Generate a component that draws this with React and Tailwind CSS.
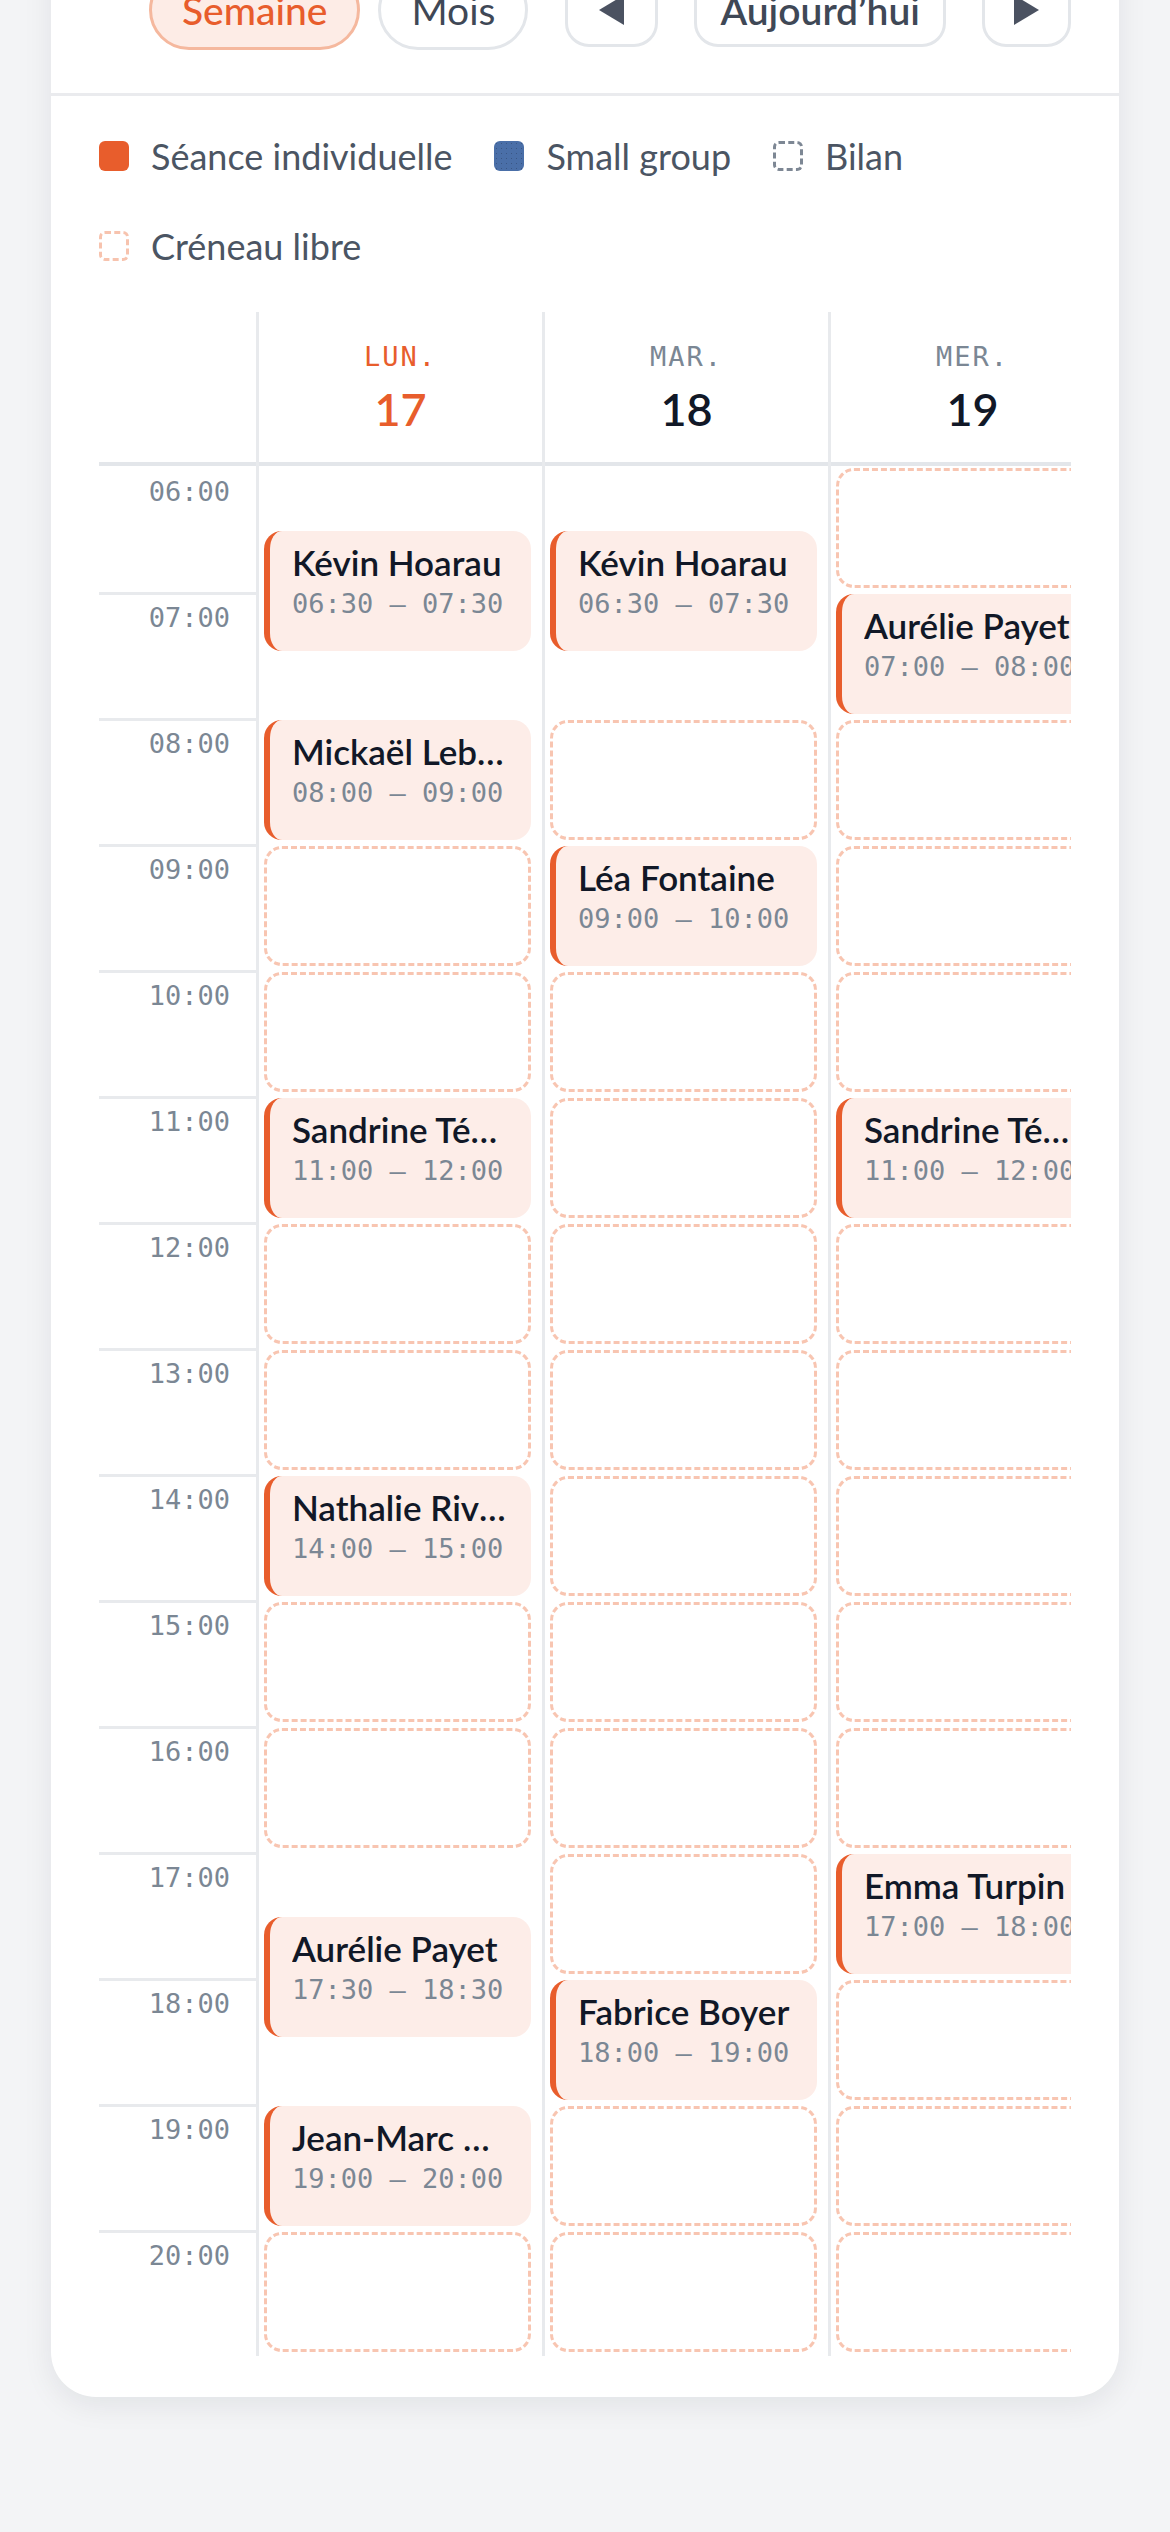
import React from "react";

const HOUR_PX = 126;
const FIRST_HOUR = 6;
const HOURS = Array.from({ length: 15 }, (_, i) => FIRST_HOUR + i);

const toMinutes = (t) => {
  const [h, m] = t.split(":").map(Number);
  return h * 60 + m;
};
const label = (h) => `${String(h).padStart(2, "0")}:00`;

// Week of 17 → 23
const WEEK = [
  {
    short: "LUN.",
    date: 17,
    today: true,
    events: [
      { name: "Kévin Hoarau", start: "06:30", end: "07:30" },
      { name: "Mickaël Lebreton", start: "08:00", end: "09:00" },
      { name: "Sandrine Técher", start: "11:00", end: "12:00" },
      { name: "Nathalie Rivière", start: "14:00", end: "15:00" },
      { name: "Aurélie Payet", start: "17:30", end: "18:30" },
      { name: "Jean-Marc Grondin", start: "19:00", end: "20:00" },
    ],
    free: [9, 10, 12, 13, 15, 16, 20],
  },
  {
    short: "MAR.",
    date: 18,
    events: [
      { name: "Kévin Hoarau", start: "06:30", end: "07:30" },
      { name: "Léa Fontaine", start: "09:00", end: "10:00" },
      { name: "Fabrice Boyer", start: "18:00", end: "19:00" },
    ],
    free: [8, 10, 11, 12, 13, 14, 15, 16, 17, 19, 20],
  },
  {
    short: "MER.",
    date: 19,
    events: [
      { name: "Aurélie Payet", start: "07:00", end: "08:00" },
      { name: "Sandrine Técher", start: "11:00", end: "12:00" },
      { name: "Emma Turpin", start: "17:00", end: "18:00" },
    ],
    free: [6, 8, 9, 10, 12, 13, 14, 15, 16, 18, 19, 20],
  },
  {
    short: "JEU.",
    date: 20,
    events: [
      { name: "Kévin Hoarau", start: "06:30", end: "07:30" },
      { name: "Léa Fontaine", start: "12:00", end: "13:00" },
    ],
    free: [8, 9, 10, 11, 13, 14, 15, 16, 17, 18, 19, 20],
  },
  {
    short: "VEN.",
    date: 21,
    events: [{ name: "Mickaël Lebreton", start: "08:00", end: "09:00" }],
    free: [6, 7, 9, 10, 11, 12, 13, 14, 15, 16, 17, 18, 19],
  },
  { short: "SAM.", date: 22, events: [], free: [8, 9, 10, 11] },
  { short: "DIM.", date: 23, events: [], free: [] },
];

function EventBlock({ ev }) {
  const start = toMinutes(ev.start) - FIRST_HOUR * 60;
  const dur = toMinutes(ev.end) - toMinutes(ev.start);
  return (
    <div
      className="absolute left-[5px] right-[11px] overflow-hidden rounded-[18px] border-l-[6px] border-[#e85d2c] bg-[#fdede8] pl-[22px] pr-[22px] pt-[8px]"
      style={{ top: (start / 60) * HOUR_PX + 2, height: (dur / 60) * HOUR_PX - 6 }}
    >
      <div className="truncate text-[35px] font-semibold leading-[46px] text-[#111827]">{ev.name}</div>
      <div className="whitespace-nowrap font-['DejaVu_Sans_Mono',monospace] text-[27px] leading-[38px] text-[#7b8794]">
        {ev.start} – {ev.end}
      </div>
    </div>
  );
}

function FreeSlot({ hour }) {
  return (
    <div
      className="absolute left-[5px] right-[11px] rounded-[18px] border-[3px] border-dashed border-[#f8c5b1] bg-white"
      style={{ top: (hour - FIRST_HOUR) * HOUR_PX + 2, height: HOUR_PX - 6 }}
    />
  );
}

function LegendItem({ swatch, children }) {
  return (
    <div className="flex h-[48px] items-center gap-[22px]">
      {swatch}
      <span className="text-[36px] leading-[48px] text-[#4b5563]">{children}</span>
    </div>
  );
}

export default function App() {
  return (
    <div className="min-h-screen overflow-hidden bg-[#f3f4f6] font-['Lato',sans-serif]">
      <div className="mx-[51px] -mt-[120px] mb-[80px] rounded-[45px] bg-white shadow-[0_8px_30px_rgba(15,23,42,0.08)]">
        {/* toolbar */}
        <div className="border-b-[3px] border-[#eaebee] px-[48px] pb-[43px] pt-[90px]">
          <div className="flex h-[80px] items-center justify-end gap-[37px]">
            <div className="flex items-center gap-[18px]">
              <button className="h-[80px] rounded-full border-[3px] border-[#f5b89e] bg-[#fdece6] px-[30px] text-[39px] font-medium text-[#e85d2c]">
                Semaine
              </button>
              <button className="h-[80px] rounded-full border-[3px] border-[#e3e6ea] bg-white px-[30px] text-[39px] text-[#3f4856]">
                Mois
              </button>
            </div>
            <div className="flex items-center gap-[36px]">
              <button className="flex h-[74px] w-[93px] items-center justify-center rounded-[24px] border-[3px] border-[#e3e6ea] bg-white">
                <svg width="25" height="30" viewBox="0 0 25 30">
                  <polygon points="25,0 25,30 0,15" fill="#4b5261" />
                </svg>
              </button>
              <button className="h-[74px] rounded-[24px] border-[3px] border-[#e3e6ea] bg-white px-[23px] text-[39px] font-semibold text-[#3f4856]">
                Aujourd’hui
              </button>
              <button className="flex h-[74px] w-[89px] items-center justify-center rounded-[24px] border-[3px] border-[#e3e6ea] bg-white">
                <svg width="25" height="30" viewBox="0 0 25 30">
                  <polygon points="0,0 0,30 25,15" fill="#4b5261" />
                </svg>
              </button>
            </div>
          </div>
        </div>

        <div className="px-[48px] pb-[41px]">
          {/* legend */}
          <div className="flex flex-wrap gap-x-[42px] gap-y-[42px] pb-[42px] pt-[36px]">
            <LegendItem swatch={<span className="h-[30px] w-[30px] rounded-[6px] bg-[#e85d2c]" />}>
              Séance individuelle
            </LegendItem>
            <LegendItem
              swatch={
                <span className="h-[30px] w-[30px] rounded-[6px] bg-[#4a6fa8] bg-[radial-gradient(rgba(20,30,50,0.3)_0.8px,transparent_1px)] bg-[length:5px_5px]" />
              }
            >
              Small group
            </LegendItem>
            <LegendItem swatch={<span className="h-[30px] w-[30px] rounded-[6px] border-[3px] border-dashed border-[#7d8794]" />}>
              Bilan
            </LegendItem>
            <LegendItem swatch={<span className="h-[30px] w-[30px] rounded-[6px] border-[3px] border-dashed border-[#f7c3ae]" />}>
              Créneau libre
            </LegendItem>
          </div>

          {/* week grid */}
          <div className="overflow-x-auto [scrollbar-width:none]">
            <div className="flex w-max">
              <div className="w-[157px] shrink-0">
                <div className="h-[154px] border-b-[4px] border-[#e3e6ea]" />
                {HOURS.map((h, i) => (
                  <div
                    key={h}
                    className={`h-[126px] border-t-[3px] ${i === 0 ? "border-transparent" : "border-[#e8eaed]"}`}
                  >
                    <div className="pr-[26px] pt-[5px] text-right font-['DejaVu_Sans_Mono',monospace] text-[27px] leading-[36px] text-[#7b8794]">
                      {label(h)}
                    </div>
                  </div>
                ))}
              </div>

              {WEEK.map((day) => (
                <div key={day.date} className="w-[286px] shrink-0 border-l-[3px] border-[#e8eaed]">
                  <div className="flex h-[154px] flex-col items-center border-b-[4px] border-[#e3e6ea] pt-[27px]">
                    <div
                      className={`font-['DejaVu_Sans_Mono',monospace] text-[27px] leading-[36px] tracking-[2px] ${
                        day.today ? "text-[#e85d2c]" : "text-[#7b8794]"
                      }`}
                    >
                      {day.short}
                    </div>
                    <div
                      className={`mt-[7px] text-[45px] font-semibold leading-[54px] ${
                        day.today ? "text-[#e85d2c]" : "text-[#111827]"
                      }`}
                    >
                      {day.date}
                    </div>
                  </div>
                  <div className="relative h-[1890px]">
                    {day.free.map((h) => (
                      <FreeSlot key={h} hour={h} />
                    ))}
                    {day.events.map((ev) => (
                      <EventBlock key={ev.start + ev.name} ev={ev} />
                    ))}
                  </div>
                </div>
              ))}
            </div>
          </div>
        </div>
      </div>
    </div>
  );
}
